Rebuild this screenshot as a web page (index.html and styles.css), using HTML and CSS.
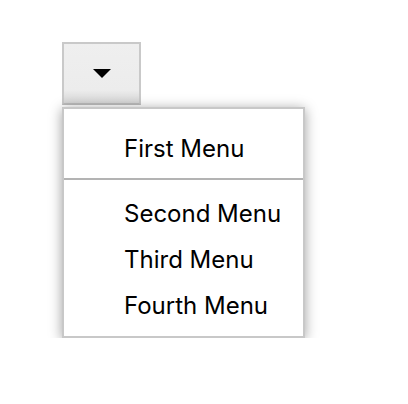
FILE: index.html
```html
<!DOCTYPE html>
<html>
<head>
<meta charset="utf-8">
<link rel="stylesheet" href="styles.css">
</head>
<body>
<div class="dropdown">
  <button class="toggle" type="button" aria-label="Open menu"><span class="caret"></span></button>
  <div class="menu">
    <ul class="section first">
      <li class="item">First Menu</li>
    </ul>
    <div class="divider"></div>
    <ul class="section">
      <li class="item">Second Menu</li>
      <li class="item">Third Menu</li>
      <li class="item">Fourth Menu</li>
    </ul>
  </div>
</div>
</body>
</html>
```

FILE: styles.css
```css
html, body {
  margin: 0;
  padding: 0;
  background: #ffffff;
}
body {
  padding: 42px 0 0 62px;
  font-family: Inter, "Liberation Sans", Arial, sans-serif;
}
.dropdown {
  display: flex;
  flex-direction: column;
  align-items: flex-start;
  gap: 2px;
}
.toggle {
  width: 79px;
  height: 63px;
  margin: 0;
  padding: 0;
  border: 2px solid #c9c9c9;
  border-bottom-color: #bdbdbd;
  background: linear-gradient(to bottom, #efefef 0%, #ececec 78%, #d6d6d6 100%);
  display: flex;
  align-items: center;
  justify-content: center;
}
.caret {
  width: 0;
  height: 0;
  border-left: 9px solid transparent;
  border-right: 9px solid transparent;
  border-top: 9px solid #000;
}
.menu {
  width: 243px;
  box-sizing: border-box;
  border: 2px solid #c8c8c8;
  background: #fff;
  box-shadow: 0 2px 12px rgba(0, 0, 0, 0.38);
  padding: 0 0 7px 0;
}
.section {
  list-style: none;
  margin: 0;
  padding: 0;
}
.section.first {
  padding-top: 17px;
}
.item {
  height: 46px;
  line-height: 46px;
  padding-left: 60px;
  font-size: 24px;
  color: #000;
  white-space: nowrap;
}
.divider {
  height: 2px;
  background: #b3b3b3;
  margin: 6px 0 11px 0;
}
```
